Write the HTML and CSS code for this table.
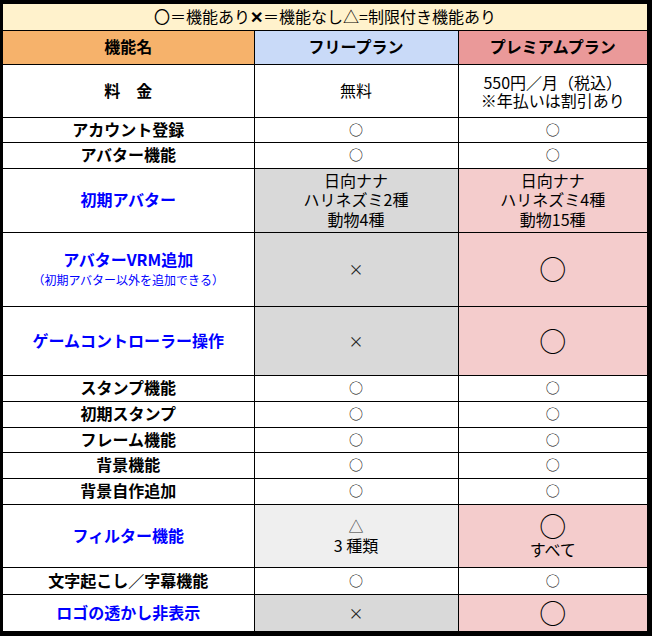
FILE: index.html
```html
<!DOCTYPE html>
<html lang="ja">
<head>
<meta charset="utf-8">
<title>プラン比較</title>
<link rel="stylesheet" href="styles.css">
</head>
<body>
<div class="frame">
<table class="plans">
<colgroup><col class="c1"><col class="c2"><col class="c3"></colgroup>
<tr class="r26"><td colspan="3" class="title">〇＝機能あり<span class="bx">✕</span>＝機能なし△=制限付き機能あり</td></tr>
<tr class="r34"><th class="h-name">機能名</th><th class="h-free">フリープラン</th><th class="h-prem">プレミアムプラン</th></tr>
<tr class="r53"><td class="name">料　金</td><td>無料</td><td class="tight">550円／月（税込）<br>※年払いは割引あり</td></tr>
<tr class="r25"><td class="name">アカウント登録</td><td class="mk">○</td><td class="mk">○</td></tr>
<tr class="r26"><td class="name">アバター機能</td><td class="mk">○</td><td class="mk">○</td></tr>
<tr class="r64"><td class="name blue">初期アバター</td><td class="gray">日向ナナ<br>ハリネズミ2種<br>動物4種</td><td class="pink">日向ナナ<br>ハリネズミ4種<br>動物15種</td></tr>
<tr class="r74"><td class="name blue">アバターVRM追加<br><span class="note">（初期アバター以外を追加できる）</span></td><td class="gray no">×</td><td class="pink big">○</td></tr>
<tr class="r69"><td class="name blue">ゲームコントローラー操作</td><td class="gray no">×</td><td class="pink big">○</td></tr>
<tr class="r26"><td class="name">スタンプ機能</td><td class="mk">○</td><td class="mk">○</td></tr>
<tr class="r26"><td class="name">初期スタンプ</td><td class="mk">○</td><td class="mk">○</td></tr>
<tr class="r25"><td class="name">フレーム機能</td><td class="mk">○</td><td class="mk">○</td></tr>
<tr class="r26"><td class="name">背景機能</td><td class="mk">○</td><td class="mk">○</td></tr>
<tr class="r26"><td class="name">背景自作追加</td><td class="mk">○</td><td class="mk">○</td></tr>
<tr class="r63"><td class="name blue">フィルター機能</td><td class="light"><span class="tri">△</span><br>3 種類</td><td class="pink"><span class="bigmark">○</span><br>すべて</td></tr>
<tr class="r27"><td class="name">文字起こし／字幕機能</td><td class="mk">○</td><td class="mk">○</td></tr>
<tr class="r37"><td class="name blue">ロゴの透かし非表示</td><td class="gray no">×</td><td class="pink big">○</td></tr>
</table>
</div>
</body>
</html>
```
FILE: styles.css
```css
html, body {
  margin: 0;
  padding: 0;
  background: #fff;
}
body {
  width: 652px;
  height: 636px;
  font-family: "Noto Sans CJK JP", "Noto Sans", sans-serif;
  color: #000;
}
.frame {
  box-sizing: border-box;
  width: 652px;
  height: 636px;
  border-style: solid;
  border-color: #000;
  border-width: 4px 5px 5px 3px;
  background: #fff;
}
.plans {
  width: 644px;
  border-collapse: collapse;
  border-style: hidden;
  table-layout: fixed;
}
.c1 { width: 251px; }
.c2 { width: 204px; }
.c3 { width: 189px; }
.plans td, .plans th {
  border: 1px solid #000;
  padding: 0;
  text-align: center;
  vertical-align: middle;
  font-size: 16px;
  font-weight: 400;
  line-height: 19.5px;
  white-space: nowrap;
}
.r25 { height: 25px; }
.r26 { height: 26px; }
.r27 { height: 27px; }
.r34 { height: 34px; }
.r37 { height: 37px; }
.r53 { height: 53px; }
.r63 { height: 63px; }
.r64 { height: 64px; }
.r69 { height: 69px; }
.r74 { height: 74px; }

.plans .title {
  background: #fff2cc;
  font-size: 16px;
}
.bx { font-weight: 700; }
.plans th { font-weight: 700; }
.h-name { background: #f6b26b; }
.h-free { background: #c9daf8; }
.h-prem { background: #ea9999; }
.plans .name { font-weight: 700; }
.plans .blue { color: #0000ff; }
.note {
  font-size: 12px;
  font-weight: 400;
  line-height: 16px;
}
.plans .tight { line-height: 18px; }
.gray { background: #d9d9d9; }
.pink { background: #f4cccc; }
.light { background: #efefef; }
.plans .mk { font-size: 14px; }
.plans .no { font-size: 15px; color: #222; }
.plans .big { font-size: 27px; line-height: 28px; }
.bigmark { font-size: 27px; line-height: 28px; }
.tri { font-size: 15px; color: #333; }
```
